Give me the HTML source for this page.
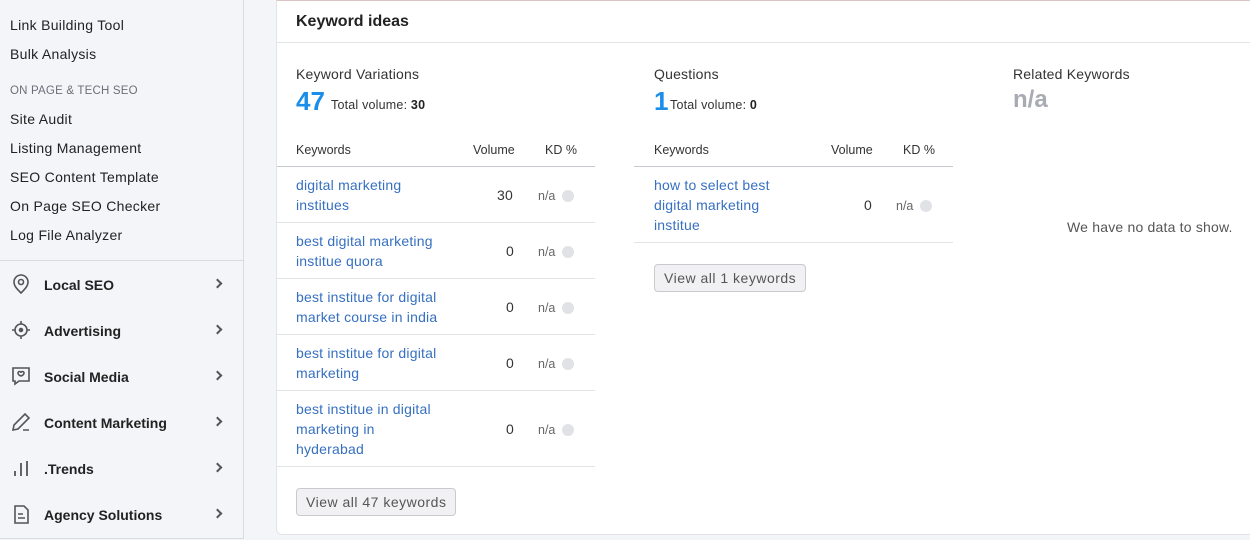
<!DOCTYPE html>
<html><head><style>
*{margin:0;padding:0;box-sizing:border-box}
body{width:1250px;height:540px;overflow:hidden;background:#f4f5f9;font-family:"Liberation Sans",sans-serif;position:relative;color:#333}
.sb{position:absolute;left:0;top:0;width:244px;height:539px;background:#f4f5f9;border-right:1px solid #dadbe0;border-bottom:1px solid #dadbe0}
.sb .it{position:absolute;left:10px;font-size:14px;color:#222;letter-spacing:.3px}
.sb .cap{position:absolute;left:10px;top:85px;font-size:11.5px;color:#6c6e79;letter-spacing:.2px}
.sb .hr{position:absolute;left:0;top:260px;width:243px;border-top:1px solid #dadbe0}
.sb .m{position:absolute;left:0;width:243px;height:30px}
.sb .m svg{position:absolute;left:10px;top:3px}
.sb .m span{position:absolute;left:44px;top:7px;font-size:14px;font-weight:bold;color:#222}
.sb .m i{position:absolute;left:214px;top:10px;width:7px;height:7px;border-right:2px solid #555;border-top:2px solid #555;transform:rotate(45deg)}
.card{position:absolute;left:276px;top:0;width:980px;height:535px;background:#fff;border:1px solid #e3e4e8;border-top:1px solid #d9c4c6;border-radius:0 0 0 6px}
.t{position:absolute;font-size:14px;color:#333;letter-spacing:.2px}
.blue{color:#3670c0}
.num{position:absolute;font-size:26px;font-weight:bold;color:#1a8ee8}
.sm{font-size:12.5px}
.hd{position:absolute;font-size:12.5px;color:#333}
.line{position:absolute;border-top:1px solid #e3e4e8}
.dot{position:absolute;width:12px;height:12px;border-radius:50%;background:#e1e2e6}
.btn{position:absolute;height:28px;border:1px solid #c9cad0;background:#f1f1f3;border-radius:4px;font-size:14px;color:#555;padding:5px 9px;letter-spacing:.5px}
</style></head><body>
<div class="sb">
<div class="it" style="top:17px">Link Building Tool</div>
<div class="it" style="top:46px">Bulk Analysis</div>
<div class="cap">ON PAGE &amp; TECH SEO</div>
<div class="it" style="top:111px">Site Audit</div>
<div class="it" style="top:140px">Listing Management</div>
<div class="it" style="top:169px">SEO Content Template</div>
<div class="it" style="top:198px">On Page SEO Checker</div>
<div class="it" style="top:227px">Log File Analyzer</div>
<div class="hr"></div>
<div class="m" style="top:270px"><svg width="22" height="22" viewBox="0 0 22 22" fill="none" stroke="#555" stroke-width="1.6"><path d="M11 20c-4-4-7-7-7-11a7 7 0 0 1 14 0c0 4-3 7-7 11z"/><circle cx="11" cy="9" r="2.5"/></svg><span>Local SEO</span><i></i></div>
<div class="m" style="top:316px"><svg width="22" height="22" viewBox="0 0 22 22" fill="none" stroke="#555" stroke-width="1.6"><circle cx="11" cy="11" r="6"/><circle cx="11" cy="11" r="1.5" fill="#555"/><path d="M11 2v3M11 17v3M2 11h3M17 11h3"/></svg><span>Advertising</span><i></i></div>
<div class="m" style="top:362px"><svg width="22" height="22" viewBox="0 0 22 22" fill="none" stroke="#555" stroke-width="1.6"><path d="M3 3h16v13H9l-4 3v-3H3z"/><path d="M8 8a1.5 1.5 0 0 1 3 0 1.5 1.5 0 0 1 3 0c0 2-3 3-3 3s-3-1-3-3z"/></svg><span>Social Media</span><i></i></div>
<div class="m" style="top:408px"><svg width="22" height="22" viewBox="0 0 22 22" fill="none" stroke="#555" stroke-width="1.6"><path d="M3 19l1-5L15 3l4 4L8 18zM13 19h6"/></svg><span>Content Marketing</span><i></i></div>
<div class="m" style="top:454px"><svg width="22" height="22" viewBox="0 0 22 22" fill="none" stroke="#555" stroke-width="1.8"><path d="M5 19v-5M11 19V6M17 19V4"/></svg><span>.Trends</span><i></i></div>
<div class="m" style="top:500px"><svg width="22" height="22" viewBox="0 0 22 22" fill="none" stroke="#555" stroke-width="1.6"><path d="M5 3h9l4 4v13H5z"/><path d="M8 11h5M8 15h7"/></svg><span>Agency Solutions</span><i></i></div>
</div>
<div class="card">
<div class="t" style="left:19px;top:12px;font-size:16px;font-weight:bold;color:#222;letter-spacing:0">Keyword ideas</div>
<div class="line" style="left:0;top:41px;width:980px"></div>
<div class="t" style="left:19px;top:65px">Keyword Variations</div>
<div class="num" style="left:19px;top:85px">47</div><div class="t sm" style="left:54px;top:97px">Total volume: <b style="color:#222">30</b></div>
<div class="t" style="left:377px;top:65px">Questions</div>
<div class="num" style="left:377px;top:85px">1</div><div class="t sm" style="left:393px;top:97px">Total volume: <b style="color:#222">0</b></div>
<div class="t" style="left:736px;top:65px">Related Keywords</div>
<div class="num" style="left:736px;top:85px;color:#a9abb3;font-size:24px">n/a</div>
<div class="t" style="left:790px;top:218px;color:#555">We have no data to show.</div>

<div class="hd" style="left:19px;top:142px">Keywords</div><div class="hd" style="left:196px;top:142px">Volume</div><div class="hd" style="left:268px;top:142px">KD %</div>
<div class="line" style="left:0;top:165px;width:318px;border-color:#c8c9ce"></div>
<div class="hd" style="left:377px;top:142px">Keywords</div><div class="hd" style="left:554px;top:142px">Volume</div><div class="hd" style="left:626px;top:142px">KD %</div>
<div class="line" style="left:357px;top:165px;width:319px;border-color:#c8c9ce"></div>

<div class="t blue" style="left:19px;top:174px;line-height:20px">digital marketing<br>institues</div><div class="t" style="left:220px;top:186px">30</div><div class="hd" style="left:261px;top:188px;color:#666">n/a</div><div class="dot" style="left:285px;top:189px"></div>
<div class="line" style="left:0;top:221px;width:318px"></div>
<div class="t blue" style="left:19px;top:230px;line-height:20px">best digital marketing<br>institue quora</div><div class="t" style="left:229px;top:242px">0</div><div class="hd" style="left:261px;top:244px;color:#666">n/a</div><div class="dot" style="left:285px;top:245px"></div>
<div class="line" style="left:0;top:277px;width:318px"></div>
<div class="t blue" style="left:19px;top:286px;line-height:20px">best institue for digital<br>market course in india</div><div class="t" style="left:229px;top:298px">0</div><div class="hd" style="left:261px;top:300px;color:#666">n/a</div><div class="dot" style="left:285px;top:301px"></div>
<div class="line" style="left:0;top:333px;width:318px"></div>
<div class="t blue" style="left:19px;top:342px;line-height:20px">best institue for digital<br>marketing</div><div class="t" style="left:229px;top:354px">0</div><div class="hd" style="left:261px;top:356px;color:#666">n/a</div><div class="dot" style="left:285px;top:357px"></div>
<div class="line" style="left:0;top:389px;width:318px"></div>
<div class="t blue" style="left:19px;top:398px;line-height:20px">best institue in digital<br>marketing in<br>hyderabad</div><div class="t" style="left:229px;top:420px">0</div><div class="hd" style="left:261px;top:422px;color:#666">n/a</div><div class="dot" style="left:285px;top:423px"></div>
<div class="line" style="left:0;top:465px;width:318px"></div>
<div class="btn" style="left:19px;top:487px">View all 47 keywords</div>

<div class="t blue" style="left:377px;top:174px;line-height:20px">how to select best<br>digital marketing<br>institue</div><div class="t" style="left:587px;top:196px">0</div><div class="hd" style="left:619px;top:198px;color:#666">n/a</div><div class="dot" style="left:643px;top:199px"></div>
<div class="line" style="left:357px;top:241px;width:319px"></div>
<div class="btn" style="left:377px;top:263px">View all 1 keywords</div>
</div>
</body></html>
